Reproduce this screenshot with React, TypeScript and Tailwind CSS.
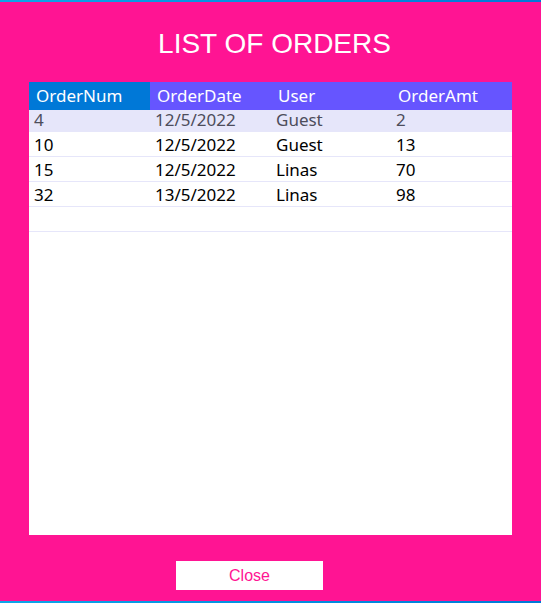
const orders = [
    {num: "4", date: "12/5/2022", user: "Guest", amt: "2"},
    {num: "10", date: "12/5/2022", user: "Guest", amt: "13"},
    {num: "15", date: "12/5/2022", user: "Linas", amt: "70"},
    {num: "32", date: "13/5/2022", user: "Linas", amt: "98"},
]

const App = () => {
    const selected = 0

    return (
        <div className="w-[541px] h-[603px] bg-[#ff1493] flex flex-col">
            <div className="h-[2px] bg-gradient-to-r from-[#0ea5e9] to-[#0078d7]"/>

            <div className="h-[80px] pt-[4px] pl-[8px] flex items-center justify-center">
                <h1 className="text-white text-[28px] font-['Liberation_Sans',Arial,sans-serif]">LIST OF ORDERS</h1>
            </div>

            <div className="mx-[29px] h-[453px] bg-white font-['Noto_Sans',sans-serif] text-[17px]">
                <div className="grid grid-cols-[121px_121px_120px_121px] h-[25px] leading-[28px] text-white">
                    <div className="bg-[#0078d7] pl-[7px]">OrderNum</div>
                    <div className="bg-[#6655ff] pl-[7px]">OrderDate</div>
                    <div className="bg-[#6655ff] pl-[7px]">User</div>
                    <div className="bg-[#6655ff] pl-[7px]">OrderAmt</div>
                </div>

                {orders.map((o, i) => (
                    <div
                        key={o.num}
                        className={
                            i === selected
                                ? "grid grid-cols-[121px_121px_120px_121px] h-[25px] leading-[26px] bg-[#e6e6fa] text-[#4d4d5c]"
                                : "grid grid-cols-[121px_121px_120px_121px] h-[25px] leading-[26px] border-b border-[#e6e6fa] text-black"
                        }
                    >
                        <div className="pl-[5px]">{o.num}</div>
                        <div className="pl-[5px]">{o.date}</div>
                        <div className="pl-[5px]">{o.user}</div>
                        <div className="pl-[5px]">{o.amt}</div>
                    </div>
                ))}
                <div className="h-[25px] border-b border-[#e6e6fa]"/>
            </div>

            <div className="mt-[26px] ml-[176px]">
                <button className="w-[147px] h-[29px] bg-white text-[#ff1493] text-[16px] font-['Liberation_Sans',Arial,sans-serif]">
                    Close
                </button>
            </div>

            <div className="mt-auto h-[2px] bg-gradient-to-r from-[#0ea5e9] to-[#0078d7]"/>
        </div>
    )
}

export default App
